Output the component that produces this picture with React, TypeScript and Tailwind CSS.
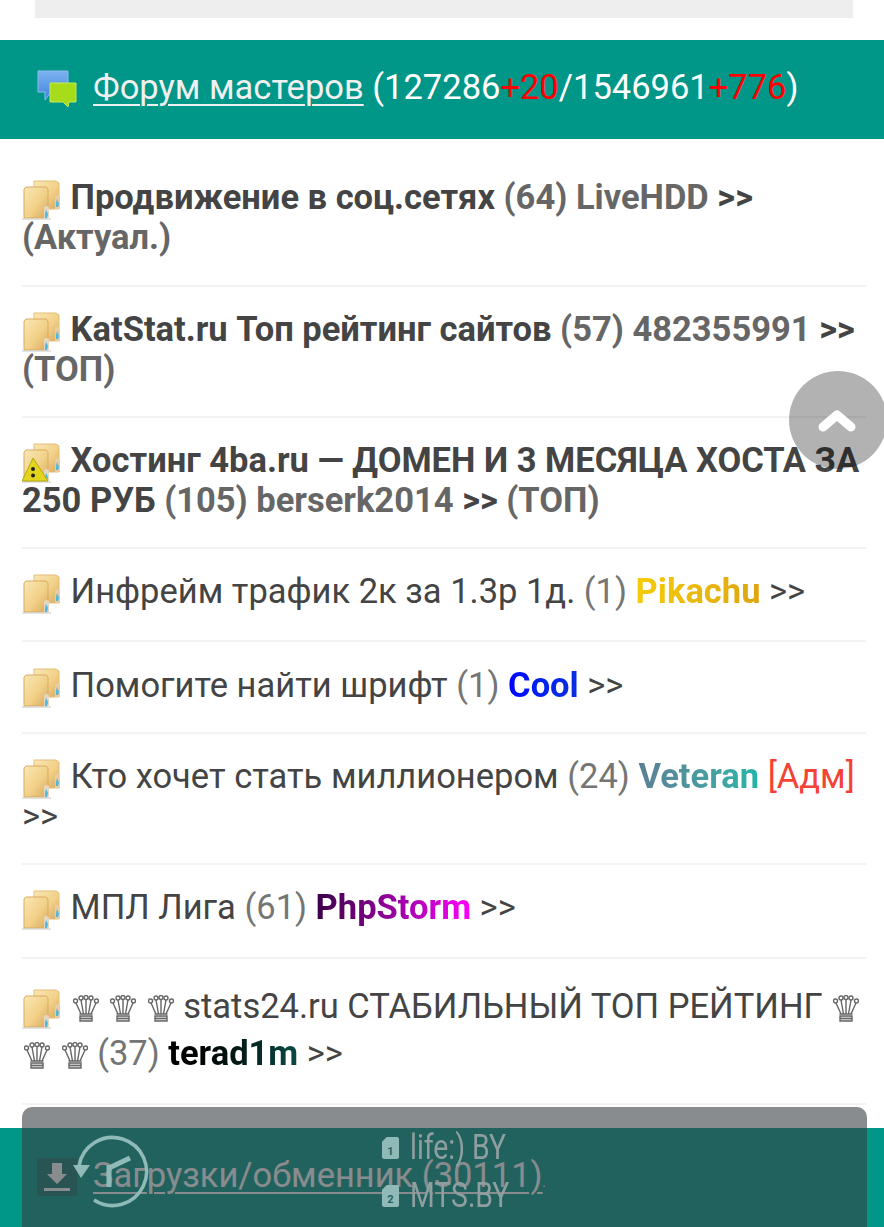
import React from "react";

function Folder({ warn = false }: { warn?: boolean }) {
  const id = warn ? "w" : "n";
  return (
    <svg width="40" height="40" viewBox="0 0 40 40" className="-my-[3px] inline-block align-[-8px]">
      <defs>
        <linearGradient id={`f${id}`} x1="0" y1="0" x2="1" y2="1">
          <stop offset="0" stopColor="#f9e7b4" />
          <stop offset="0.55" stopColor="#f2d188" />
          <stop offset="1" stopColor="#d9a85f" />
        </linearGradient>
      </defs>
      <path d="M12 1h22l3 2v26H12z" fill={`url(#f${id})`} stroke="#e4bd7a" strokeWidth="1" />
      <path d="M33 16c2-2 5-1 5 1v12h-5z" fill="#e6cda6" />
      <path d="M35 19l2 5-1 3h-2v-4z" fill="#4fb8e0" />
      <path d="M2 9l2-2h20l2 2v29H2z" fill={`url(#f${id})`} stroke="#d9aa60" strokeWidth="1" />
      <path d="M0 38h29v2H0z" fill="#ccc" opacity="0.55" />
      <path d="M22 27c2-2 5-1 5 1v10h-5z" fill="#e5d6bd" />
      <path d="M24 30l2 4-1 4h-2v-4z" fill="#4fb8e0" />
      {warn && (
        <>
          <path d="M11 15L26 38H0z" fill="#e3d51e" stroke="#b3a912" strokeWidth="1" />
          <circle cx="11" cy="26" r="2" fill="#222" />
          <circle cx="11" cy="32.500" r="2" fill="#222" />
        </>
      )}
    </svg>
  );
}

function Chat() {
  return (
    <svg width="40" height="38" viewBox="0 0 40 38" className="mt-[4px] shrink-0">
      <defs>
        <linearGradient id="chatb" x1="0" y1="0" x2="0" y2="1">
          <stop offset="0" stopColor="#7db2f0" />
          <stop offset="1" stopColor="#3f84dd" />
        </linearGradient>
      </defs>
      <path d="M1 1h30v21H14l-6 8v-8H1z" fill="url(#chatb)" stroke="#8dbcf0" strokeWidth="1" />
      <path d="M13 13h26v19h-7l-1 5-5-5H13z" fill="#a6dc1a" stroke="#c5e85e" strokeWidth="1" />
    </svg>
  );
}

function Crown() {
  return (
    <svg width="26" height="28" viewBox="0 0 26 28" className="-my-[2px] mr-[1px] ml-[2px] inline-block align-[-3px]" fill="none" stroke="#666" strokeWidth="1.400">
      <circle cx="2.500" cy="6" r="2" fill="#fff" />
      <circle cx="8" cy="3" r="2" fill="#fff" />
      <circle cx="13" cy="2.500" r="2" fill="#fff" />
      <circle cx="18" cy="3" r="2" fill="#fff" />
      <circle cx="23.500" cy="6" r="2" fill="#fff" />
      <path d="M3 8l5 11M8 5l2.500 14M13 5v14M18 5l-2.500 14M23 8l-5 11M6.500 19h13" />
      <path d="M7 21h12v5H7z" fill="#ddd" />
      <path d="M7 23.500h12" />
    </svg>
  );
}

function Grad({ className, children }: { className: string; children: React.ReactNode }) {
  return <span className={`font-bold bg-clip-text text-transparent ${className}`}>{children}</span>;
}

function Row({ children, className = "" }: { children: React.ReactNode; className?: string }) {
  return <div className={`border-b-2 border-[#f3f3f3] ${className}`}>{children}</div>;
}

const Count = ({ children }: { children: React.ReactNode }) => <span className="text-[#757575]">{children}</span>;

function SimIcon({ n }: { n: string }) {
  return (
    <span className="flex h-[22px] w-[17px] shrink-0 items-end justify-center rounded-[2px] bg-[#8fbab7] text-[11px] leading-[14px] font-bold text-[#226563] [clip-path:polygon(28%_0,100%_0,100%_100%,0_100%,0_22%)]">
      {n}
    </span>
  );
}

export default function App() {
  return (
    <div className="relative h-[1227px] w-[884px] overflow-hidden bg-white text-[34.5px] leading-[40px] text-[#444] font-['Roboto',sans-serif]">
      <div className="ml-[35px] mr-[31px] h-[18px] bg-[#eeeeee]" />
      <div className="mt-[22px] flex h-[99px] items-center gap-[16px] bg-[#009688] pb-[5px] pl-[37px] text-white">
        <Chat />
        <div className="whitespace-nowrap">
          <span className="text-[#f0f0f0] underline decoration-2 underline-offset-[5px]">Форум мастеров</span> (127286
          <span className="text-[#f00]">+20</span>/1546961<span className="text-[#f00]">+776</span>)
        </div>
      </div>

      <div className="ml-[22px] mr-[18px]">
        <Row className="pt-[38px] pb-[28px]">
          <Folder /> <b>Продвижение в соц.сетях</b> <b className="text-[#666]">(64) LiveHDD</b> <b>&gt;&gt;</b> <b className="text-[#666]">(Актуал.)</b>
        </Row>
        <Row className="pt-[22px] pb-[27px]">
          <Folder /> <b>KatStat.ru Топ рейтинг сайтов</b> <b className="text-[#666]">(57) 482355991</b> <b>&gt;&gt;</b> <b className="text-[#666]">(ТОП)</b>
        </Row>
        <Row className="pt-[22px] pb-[27px]">
          <Folder warn /> <b>Хостинг 4ba.ru — ДОМЕН И 3 МЕСЯЦА ХОСТА ЗА 250 РУБ</b> <b className="text-[#666]">(105) berserk2014</b> <b>&gt;&gt;</b> <b className="text-[#666]">(ТОП)</b>
        </Row>
        <Row className="pt-[22px] pb-[29px]">
          <Folder /> Инфрейм трафик 2к за 1.3р 1д. <Count>(1)</Count>{" "}
          <Grad className="bg-gradient-to-r from-[#f5cc0a] to-[#dda50f]">Pikachu</Grad> &gt;&gt;
        </Row>
        <Row className="pt-[23px] pb-[27px]">
          <Folder /> Помогите найти шрифт <Count>(1)</Count>{" "}
          <Grad className="bg-gradient-to-r from-[#0000ff] to-[#0a2fe0]">Cool</Grad> &gt;&gt;
        </Row>
        <Row className="pt-[22px] pb-[27px]">
          <Folder /> Кто хочет стать миллионером <Count>(24)</Count>{" "}
          <Grad className="bg-gradient-to-r from-[#5b7f96] to-[#1fb5a8]">Veteran</Grad> <span className="text-[#f44336]">[Адм]</span> &gt;&gt;
        </Row>
        <Row className="pt-[22px] pb-[30px]">
          <Folder /> МПЛ Лига <Count>(61)</Count>{" "}
          <Grad className="bg-gradient-to-r from-[#3b0048] to-[#ff00ff]">PhpStorm</Grad> &gt;&gt;
        </Row>
        <Row className="pt-[24px] pb-[26px] leading-[47px]">
          <Folder /> <Crown /> <Crown /> <Crown /> stats24.ru СТАБИЛЬНЫЙ ТОП РЕЙТИНГ <Crown /> <Crown /> <Crown /> <Count>(37)</Count>{" "}
          <Grad className="bg-gradient-to-r from-[#000] to-[#0c4a44]">terad1m</Grad> &gt;&gt;
        </Row>
      </div>

      <div className="absolute bottom-0 left-0 right-0 flex h-[99px] items-center gap-[8px] bg-[#009688] pb-[5px] pl-[37px] text-white">
        <svg width="40" height="38" viewBox="0 0 40 38" className="mt-[3px] shrink-0">
          <rect width="40" height="38" fill="#333" opacity="0.3" />
          <path d="M15 5h10v11h5L20 26 10 16h5zM7 30h26v3H7z" fill="#fff" />
        </svg>
        <div className="ml-[8px] whitespace-nowrap">
          <span className="underline decoration-2 underline-offset-[5px]">Загрузки/обменник (30111)</span>
          <span className="text-[12px] leading-none">.</span>
        </div>
      </div>

      <div className="absolute bottom-0 left-[22px] right-[17px] top-[1107px] rounded-t-[10px] bg-[rgba(57,64,66,0.6)]">
        <svg width="80" height="80" viewBox="0 0 80 80" className="absolute left-[48px] top-[23px]" fill="none" stroke="#8fbab7" strokeWidth="3.500">
          <path d="M9 36A34 34 0 1 1 24 70" />
          <path d="M11 48L3 35h17z" fill="#8fbab7" stroke="none" />
          <path d="M39 38l21-10M39 35v22" strokeWidth="5" />
        </svg>
        <div className="absolute left-[360px] top-[17px] flex h-[48px] items-center gap-[11px] whitespace-nowrap text-[35px] leading-[48px] text-[#8f9f9f]">
          <SimIcon n="1" />
          <span className="origin-left scale-x-[0.81]">life:) BY</span>
        </div>
        <div className="absolute left-[360px] top-[65px] flex h-[48px] items-center gap-[11px] whitespace-nowrap text-[35px] leading-[48px] text-[#8f9f9f]">
          <SimIcon n="2" />
          <span className="origin-left scale-x-[0.81]">MTS.BY</span>
        </div>
      </div>

      <div className="absolute left-[789px] top-[371px] flex h-[98px] w-[98px] items-center justify-center rounded-full bg-[rgba(0,0,0,0.3)]">
        <svg width="40" height="26" viewBox="0 0 40 26" fill="none" stroke="#fff" strokeWidth="9" strokeLinecap="round" strokeLinejoin="round" className="mr-[3px]">
          <path d="M6 20L20 8l14 12" />
        </svg>
      </div>
    </div>
  );
}
